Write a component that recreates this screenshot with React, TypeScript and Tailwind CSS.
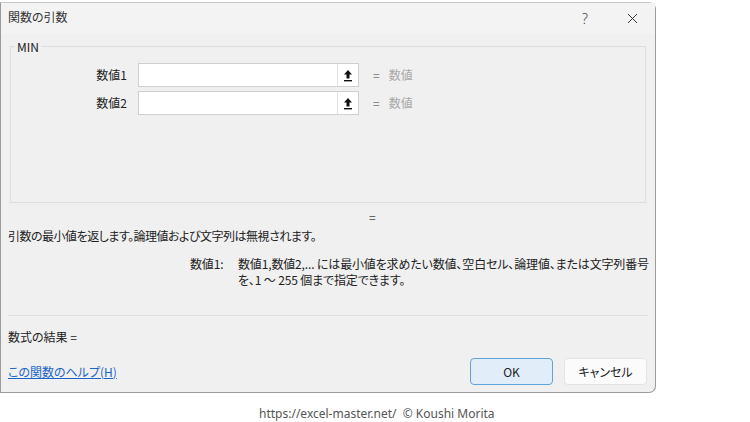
import { X } from "lucide-react";

const jp = { fontFamily: '"Noto Sans CJK JP", "Noto Sans", sans-serif' };

function RefButton() {
  return (
    <div className="w-[21px] h-full border-l border-[#e2e2e2] bg-white flex items-center justify-center">
      <svg width="10" height="13" viewBox="0 0 10 13">
        <path d="M5 1 L9 5.5 H6.5 V9.5 H3.5 V5.5 H1 Z" fill="#111" />
        <rect x="1" y="11" width="8" height="1.4" fill="#111" />
      </svg>
    </div>
  );
}

function ArgRow({ label }: { label: string }) {
  return (
    <div className="flex items-center h-[24px]">
      <div className="w-[117px] pr-[1px] text-right text-[12px] text-[#222]">{label}</div>
      <div className="ml-[10px] w-[221px] h-[24px] border border-[#cfcfcf] bg-white flex justify-end">
        <RefButton />
      </div>
      <div className="ml-[14px] text-[12px] text-[#777]">=</div>
      <div className="ml-[9px] text-[12px] text-[#a8a8a8]">数値</div>
    </div>
  );
}

export default function App() {
  return (
    <div className="w-[750px] h-[422px] bg-white relative overflow-hidden [font-feature-settings:'palt']" style={jp}>
      <div className="h-[2px] bg-white" />
      <div className="w-[656px] h-[391px] bg-[#f0f0f0] border border-[#9a9a9a] border-t-[#c8c8c8] rounded-tr-[7px] rounded-br-[7px] flex flex-col">
        {/* title bar */}
        <div className="h-[31px] bg-[#f3f3f3] flex items-center pl-[7px] pr-[14px]">
          <span className="text-[12px] text-[#333] -mt-[3px]">関数の引数</span>
          <span className="ml-auto mr-[36px] text-[14px] text-[#444] font-light" style={{ fontFamily: '"Noto Sans", sans-serif' }}>?</span>
          <X className="w-[17px] h-[17px] text-[#333]" strokeWidth={1.4} />
        </div>

        {/* group box */}
        <div className="relative mx-[9px] mt-[12px] h-[157px] border border-[#dedede] pt-[16px]">
          <span className="absolute -top-[8px] left-[4px] px-[2px] bg-[#f0f0f0] text-[12px] text-[#222] leading-[15px]">MIN</span>
          <div className="flex flex-col gap-[4px]">
            <ArgRow label="数値1" />
            <ArgRow label="数値2" />
          </div>
        </div>

        <div className="mt-[7px] pl-[368px] text-[12px] text-[#444] leading-[14px]">=</div>

        <div className="mt-[4px] pl-[7px] text-[12px] text-[#222] leading-[16px] whitespace-nowrap tracking-[-0.5px]">
          引数の最小値を返します。論理値および文字列は無視されます。
        </div>

        <div className="mt-[12px] flex text-[12px] text-[#222] leading-[16px] whitespace-nowrap tracking-[-0.15px]">
          <div className="w-[237px] pl-[189px]">数値1:</div>
          <div>
            数値1,数値2,... には最小値を求めたい数値、空白セル、論理値、または文字列番号
            <br />
            を、1 ～ 255 個まで指定できます。
          </div>
        </div>

        <div className="mt-[27px] mx-[7px] h-px bg-[#e2e2e2]" />

        <div className="mt-[13px] pl-[7px] text-[12px] text-[#222] leading-[16px]">数式の結果 =</div>

        <div className="mt-[13px] flex items-center pl-[7px] pr-[8px]">
          <a className="text-[12px] text-[#1a66c8] underline leading-[16px]">この関数のヘルプ(H)</a>
          <button className="ml-auto w-[83px] h-[27px] rounded-[4px] border border-[#5fa2dd] bg-[#e1eefa] text-[12px] text-[#222]">OK</button>
          <button className="ml-[11px] w-[83px] h-[27px] rounded-[4px] border border-[#e4e4e4] bg-[#fbfbfb] text-[12px] text-[#222]">キャンセル</button>
        </div>
      </div>

      <div className="mt-[12px] pl-[259px] text-[12px] text-[#555]" style={{ fontFamily: '"Noto Sans", "Noto Sans CJK JP", sans-serif' }}>
        https://excel-master.net/&nbsp;&nbsp;© Koushi Morita
      </div>
    </div>
  );
}
